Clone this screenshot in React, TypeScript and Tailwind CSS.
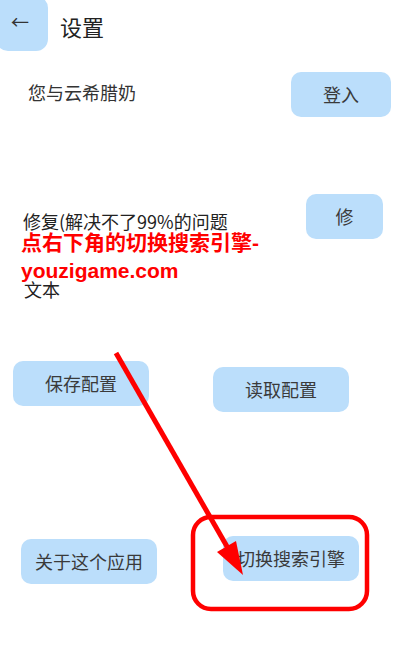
import React from "react";

const btn =
  "bg-[#bbdefb] text-[#3a3a3a] rounded-[10px] h-[45px] flex items-center justify-center text-[18px]";

export default function App() {
  return (
    <div
      className="relative w-[402px] h-[668px] bg-white overflow-hidden text-[#333]"
      style={{ fontFamily: '"Noto Sans CJK SC", "Noto Sans", sans-serif' }}
    >
      {/* header */}
      <div className="flex items-start">
        <div className="-ml-[4px] -mt-[4px] w-[52px] h-[55px] rounded-[12px] bg-[#bbdefb] flex items-center justify-center text-[18px] text-[#333]">
          <span className="-mt-[4px] -ml-[4px]">←</span>
        </div>
        <div className="ml-[12px] mt-[10px] text-[22px] leading-[32px] text-[#222]">设置</div>
      </div>

      {/* row 1 */}
      <div className="mt-[21px] flex items-center justify-between pl-[28px] pr-[11px]">
        <div className="text-[18px] text-[#333] -mt-[4px]">您与云希腊奶</div>
        <div className={`${btn} w-[100px]`}>登入</div>
      </div>

      {/* row 2 */}
      <div className="relative mt-[77px] flex justify-between pl-[23px] pr-[19px]">
        <div className="pt-[14px] text-[18px] leading-[26px] text-[#222]">
          <div>修复(解决不了99%的问题</div>
          <div className="mt-[42px] ml-[1px]">文本</div>
        </div>
        <div className={`${btn} w-[77px]`}>修</div>
      </div>

      {/* row 3 */}
      <div className="mt-[59px] flex items-start pl-[13px]">
        <div className={`${btn} w-[136px]`}>保存配置</div>
        <div className={`${btn} w-[136px] ml-[64px] mt-[6px]`}>读取配置</div>
      </div>

      {/* row 4 */}
      <div className="mt-[124px] flex items-start pl-[21px]">
        <div className={`${btn} w-[136px] mt-[3px]`}>关于这个应用</div>
        <div className={`${btn} w-[136px] ml-[66px]`}>切换搜索引擎</div>
      </div>

      {/* red watermark text */}
      <div
        className="absolute left-[21px] top-[229px] text-[21px] leading-[28px] font-bold text-[#ff0000]"
        style={{ fontFamily: '"Liberation Sans", "Noto Sans CJK SC", sans-serif' }}
      >
        <div>点右下角的切换搜索引擎-</div>
        <div>youzigame.com</div>
      </div>

      {/* annotation overlay */}
      <svg className="absolute inset-0 pointer-events-none" width="402" height="668" viewBox="0 0 402 668">
        <rect x="193" y="517" width="174" height="92" rx="18" fill="none" stroke="#ff0000" strokeWidth="4.5" />
        <line x1="116" y1="353" x2="229" y2="550" stroke="#ff0000" strokeWidth="5" />
        <polygon points="243,575 217,552 236,541" fill="#ff0000" />
      </svg>
    </div>
  );
}
